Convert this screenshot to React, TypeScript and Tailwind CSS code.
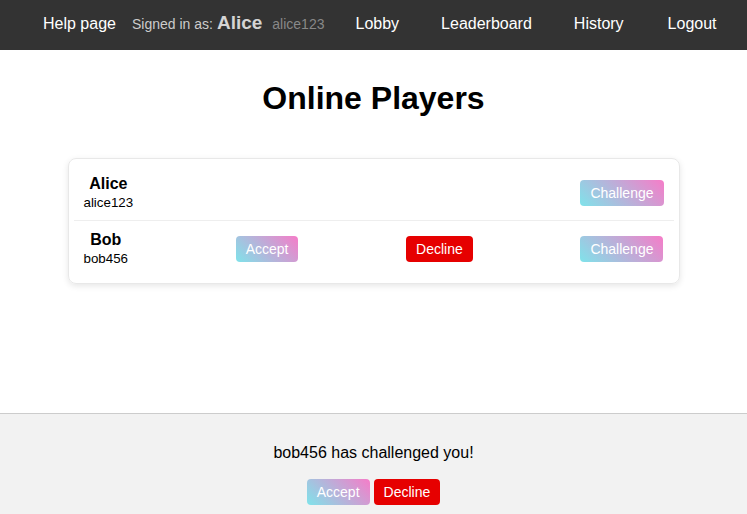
const players = [
  { name: "Alice", username: "alice123", pending: false },
  { name: "Bob", username: "bob456", pending: true },
];

const gradientBtn =
  "rounded-[4px] bg-[linear-gradient(45deg,#7fe3ea,#f67cc8)] px-[10px] py-[5px] text-[14px] leading-[16px] text-white";
const redBtn =
  "rounded-[4px] bg-[#e60000] px-[10px] py-[5px] text-[14px] leading-[16px] text-white";

function Navbar() {
  return (
    <nav className="flex h-[50px] shrink-0 items-baseline bg-[#333333] pl-[43px] pt-[9px] text-[16px] text-white">
      <a className="leading-[18px]">Help page</a>
      <div className="ml-[16px] flex items-baseline">
        <span className="text-[14px] text-[#cccccc]">Signed in as:</span>
        <span className="ml-[4px] text-[19px] font-bold text-[#d4d4d4]">Alice</span>
        <span className="ml-[10px] text-[14px] text-[#888888]">alice123</span>
      </div>
      <a className="ml-[31px]">Lobby</a>
      <a className="ml-[42px]">Leaderboard</a>
      <a className="ml-[42px]">History</a>
      <a className="ml-[44px]">Logout</a>
    </nav>
  );
}

function PlayerRow({
  name,
  username,
  pending,
  last,
}: {
  name: string;
  username: string;
  pending: boolean;
  last: boolean;
}) {
  return (
    <div
      className={`flex h-[56px] items-center justify-between px-[10px] ${
        last ? "" : "border-b border-[#eeeeee]"
      }`}
    >
      <div className="flex flex-col items-center">
        <span className="text-[16px] font-bold leading-[19px]">{name}</span>
        <span className="text-[13.33px] leading-[19px]">{username}</span>
      </div>
      {pending && <button className={gradientBtn}>Accept</button>}
      {pending && <button className={redBtn}>Decline</button>}
      <button className={gradientBtn}>Challenge</button>
    </div>
  );
}

export default function App() {
  return (
    <div className="flex h-screen flex-col bg-white font-['Liberation_Sans',Arial,sans-serif] text-black">
      <Navbar />

      <h1 className="mt-[30px] text-center text-[32px] font-bold leading-[37px]">
        Online Players
      </h1>

      <div className="mx-auto mt-[41px] w-[612px] rounded-[8px] border border-[#e8e8e8] px-[5px] py-[6px] shadow-[0_2px_6px_rgba(0,0,0,0.1)]">
        {players.map((p, i) => (
          <PlayerRow key={p.username} {...p} last={i === players.length - 1} />
        ))}
      </div>

      {/* Challenge notification */}
      <div className="mt-auto flex flex-col items-center border-t border-[#cccccc] bg-[#f2f2f2] pb-[9px] pt-[30px]">
        <p className="text-[16px] leading-[18px]">bob456 has challenged you!</p>
        <div className="mt-[17px] flex gap-[4px]">
          <button className={gradientBtn}>Accept</button>
          <button className={redBtn}>Decline</button>
        </div>
      </div>
    </div>
  );
}
